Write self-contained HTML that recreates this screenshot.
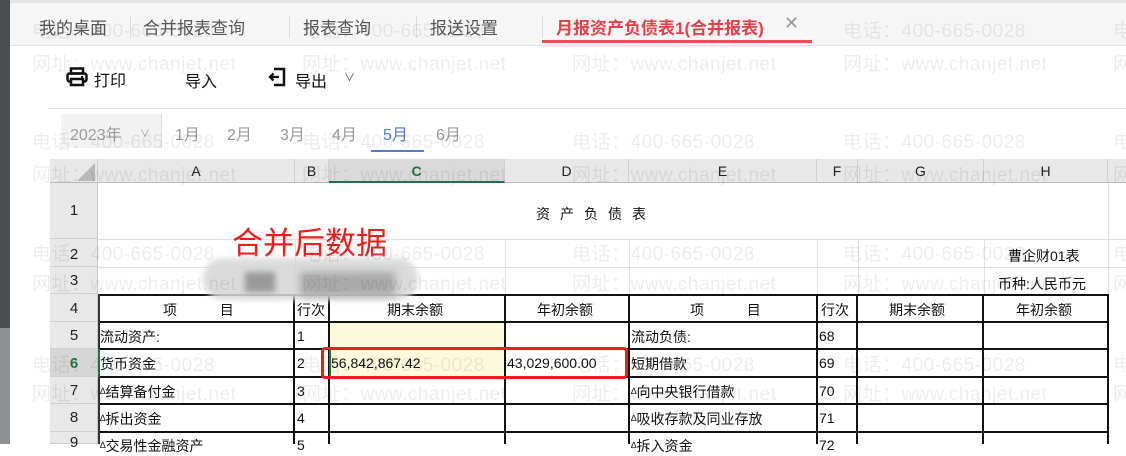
<!DOCTYPE html>
<html><head><meta charset="utf-8"><style>
*{margin:0;padding:0;box-sizing:border-box}
body{width:1126px;height:444px;overflow:hidden;background:#fff;position:relative;font-family:"Liberation Sans","Noto Sans CJK SC",sans-serif;color:#222}
.a{position:absolute}
.wm{position:absolute;font-size:19px;color:rgba(0,0,0,0.075);white-space:nowrap;z-index:50;letter-spacing:0.5px;font-family:"Liberation Sans","Noto Sans CJK SC",sans-serif}
.tab{position:absolute;top:14px;font-size:17px;color:#555}
.sep{position:absolute;top:16px;width:1px;height:22px;background:#ddd}
.ch{position:absolute;top:159px;height:24px;background:#e8e8e8;border-right:1px solid #cfcfcf;border-bottom:1px solid #bbb;text-align:center;font-size:14px;line-height:24px;color:#222}
.rh{position:absolute;left:50px;width:48px;background:#e8e8e8;border-bottom:1px solid #cfcfcf;text-align:center;font-size:15px;color:#222}
.t{position:absolute;font-size:14px;white-space:nowrap;color:#111}
.tr{font-size:9px;vertical-align:3px}
.hl{position:absolute;height:1px;background:#e0e0e0}
.vl{position:absolute;width:1px;background:#e0e0e0}
.bh{position:absolute;height:2px;background:#111}
.bv{position:absolute;width:2px;background:#111}
</style></head><body>
<div class="a" style="left:0;top:0;width:10px;height:328px;background:#4b4d4f"></div>
<div class="a" style="left:0;top:328px;width:10px;height:116px;background:#8f9091"></div>
<div class="a" style="left:10px;top:0;width:1116px;height:46px;background:#f6f6f6;border-top:3px solid #e4e4e4;border-bottom:1px solid #e2e2e2"></div>
<div class="tab" style="left:39px">我的桌面</div>
<div class="sep" style="left:130px"></div>
<div class="tab" style="left:143px">合并报表查询</div>
<div class="sep" style="left:289px"></div>
<div class="tab" style="left:303px">报表查询</div>
<div class="sep" style="left:416px"></div>
<div class="tab" style="left:430px">报送设置</div>
<div class="sep" style="left:542px"></div>
<div class="tab" style="left:556px;color:#e8404a;font-weight:bold">月报资产负债表1(合并报表)</div>
<div class="tab" style="left:784px;color:#999;font-size:18px;top:13px">✕</div>
<div class="a" style="left:542px;top:40px;width:270px;height:3px;background:#e8505a"></div>
<svg class="a" style="left:66px;top:67px" width="22" height="20" viewBox="0 0 22 20"><rect x="5" y="1.5" width="12" height="5" fill="none" stroke="#111" stroke-width="2.5"/><rect x="1.5" y="6.5" width="19" height="8" rx="2" fill="none" stroke="#111" stroke-width="2.5"/><rect x="5" y="12" width="12" height="6" fill="#fff" stroke="#111" stroke-width="2.5"/><rect x="15" y="9" width="2" height="2" fill="#111"/></svg>
<div class="t" style="left:94px;top:67px;font-size:16px">打印</div>
<div class="t" style="left:185px;top:68px;font-size:16px">导入</div>
<svg class="a" style="left:267px;top:67px" width="20" height="20" viewBox="0 0 20 20"><path d="M7 2H17V18H7" fill="none" stroke="#111" stroke-width="2.5"/><path d="M12 10H3M6.5 6.5L3 10L6.5 13.5" fill="none" stroke="#111" stroke-width="2.3"/></svg>
<div class="t" style="left:295px;top:68px;font-size:16px">导出</div>
<div class="t" style="left:344px;top:69px;font-size:11px;color:#555">∨</div>
<div class="a" style="left:48px;top:108px;width:1078px;height:1px;background:#e2e2e2"></div>
<div class="a" style="left:61px;top:114px;width:100px;height:34px;background:#f2f2f2"></div>
<div class="a" style="left:161px;top:114px;width:1px;height:34px;background:#ddd"></div>
<div class="t" style="left:70px;top:121px;font-size:16px;color:#999">2023年</div>
<div class="t" style="left:140px;top:125px;font-size:10px;color:#999">∨</div>
<div class="t" style="left:175px;top:121px;font-size:16px;color:#999">1月</div>
<div class="t" style="left:227px;top:121px;font-size:16px;color:#999">2月</div>
<div class="t" style="left:280px;top:121px;font-size:16px;color:#999">3月</div>
<div class="t" style="left:332px;top:121px;font-size:16px;color:#999">4月</div>
<div class="t" style="left:383px;top:121px;font-size:16px;color:#4a7fd4">5月</div>
<div class="t" style="left:436px;top:121px;font-size:16px;color:#999">6月</div>
<div class="a" style="left:371px;top:150px;width:53px;height:2px;background:#4a7fd4"></div>
<div class="ch" style="left:50px;width:48px"></div>
<svg class="a" style="left:75px;top:163px" width="20" height="18"><path d="M20 0V18H2Z" fill="#b9b9b9"/></svg>
<div class="ch" style="left:98px;width:197px">A</div>
<div class="ch" style="left:295px;width:34px">B</div>
<div class="ch" style="left:329px;width:176px;background:#dadada;color:#1f7244;font-weight:bold;border-bottom:2px solid #217346">C</div>
<div class="ch" style="left:505px;width:124px">D</div>
<div class="ch" style="left:629px;width:188px">E</div>
<div class="ch" style="left:817px;width:41px">F</div>
<div class="ch" style="left:858px;width:126px">G</div>
<div class="ch" style="left:984px;width:124px">H</div>
<div class="ch" style="left:1108px;width:18px;border-right:none"></div>
<div class="rh" style="top:183px;height:56px;line-height:56px">1</div>
<div class="rh" style="top:239px;height:28px;line-height:32px">2</div>
<div class="rh" style="top:267px;height:27px;line-height:28px">3</div>
<div class="rh" style="top:294px;height:28px;line-height:30px">4</div>
<div class="rh" style="top:322px;height:27px;line-height:28px">5</div>
<div class="rh" style="top:349px;height:28px;line-height:30px;background:#d6d6d6;color:#1f7244;font-weight:bold">6</div>
<div class="rh" style="top:377px;height:27px;line-height:28px">7</div>
<div class="rh" style="top:404px;height:28px;line-height:28px">8</div>
<div class="rh" style="top:432px;height:12px;line-height:22px">9</div>
<div class="a" style="left:97px;top:183px;width:1px;height:261px;background:#c8c8c8"></div>
<div class="hl" style="left:98px;top:239px;width:1028px"></div>
<div class="hl" style="left:98px;top:267px;width:1028px"></div>
<div class="vl" style="left:295px;top:239px;height:55px"></div>
<div class="vl" style="left:329px;top:239px;height:55px"></div>
<div class="vl" style="left:505px;top:239px;height:55px"></div>
<div class="vl" style="left:629px;top:239px;height:55px"></div>
<div class="vl" style="left:817px;top:239px;height:55px"></div>
<div class="vl" style="left:858px;top:239px;height:55px"></div>
<div class="vl" style="left:984px;top:239px;height:55px"></div>
<div class="vl" style="left:1108px;top:183px;height:261px"></div>
<div class="a" style="left:330px;top:323px;width:175px;height:54px;background:#fcf9dc"></div>
<div class="bh" style="left:98px;top:294px;width:1011px"></div>
<div class="bh" style="left:98px;top:321px;width:1011px"></div>
<div class="bh" style="left:98px;top:348px;width:1011px"></div>
<div class="bh" style="left:98px;top:376px;width:1011px"></div>
<div class="bh" style="left:98px;top:403px;width:1011px"></div>
<div class="bh" style="left:98px;top:431px;width:1011px"></div>
<div class="bv" style="left:98px;top:294px;height:150px;background:#333"></div>
<div class="bv" style="left:293px;top:294px;height:150px"></div>
<div class="bv" style="left:328px;top:294px;height:150px"></div>
<div class="bv" style="left:504px;top:294px;height:150px"></div>
<div class="bv" style="left:628px;top:294px;height:150px"></div>
<div class="bv" style="left:816px;top:294px;height:150px"></div>
<div class="bv" style="left:856px;top:294px;height:150px"></div>
<div class="bv" style="left:982px;top:294px;height:150px"></div>
<div class="bv" style="left:1107px;top:294px;height:150px"></div>
<div class="a" style="left:98px;top:349px;width:2px;height:28px;background:#217346"></div>
<div class="a" style="left:329px;top:349px;width:2px;height:28px;background:#217346"></div>
<div class="t" style="left:536px;top:204px;letter-spacing:10px">资产负债表</div>
<div class="t" style="left:1008px;top:246px">曹企财01表</div>
<div class="t" style="left:998px;top:274px">币种:人民币元</div>
<div class="t" style="left:163px;top:300px">项&nbsp;&nbsp;&nbsp;&nbsp;&nbsp;&nbsp;&nbsp;&nbsp;&nbsp;&nbsp;&nbsp;目</div>
<div class="t" style="left:297px;top:300px">行次</div>
<div class="t" style="left:387px;top:300px">期末余额</div>
<div class="t" style="left:537px;top:300px">年初余额</div>
<div class="t" style="left:690px;top:300px">项&nbsp;&nbsp;&nbsp;&nbsp;&nbsp;&nbsp;&nbsp;&nbsp;&nbsp;&nbsp;&nbsp;目</div>
<div class="t" style="left:821px;top:300px">行次</div>
<div class="t" style="left:889px;top:300px">期末余额</div>
<div class="t" style="left:1016px;top:300px">年初余额</div>
<div class="t" style="left:100px;top:327px">流动资产:</div>
<div class="t" style="left:297px;top:328px">1</div>
<div class="t" style="left:631px;top:327px">流动负债:</div>
<div class="t" style="left:819px;top:328px">68</div>
<div class="t" style="left:100px;top:354px">货币资金</div>
<div class="t" style="left:297px;top:355px">2</div>
<div class="t" style="left:331px;top:355px">56,842,867.42</div>
<div class="t" style="left:507px;top:355px">43,029,600.00</div>
<div class="t" style="left:631px;top:354px">短期借款</div>
<div class="t" style="left:819px;top:355px">69</div>
<div class="t" style="left:100px;top:382px"><span class="tr">∆</span>结算备付金</div>
<div class="t" style="left:297px;top:383px">3</div>
<div class="t" style="left:631px;top:382px"><span class="tr">∆</span>向中央银行借款</div>
<div class="t" style="left:819px;top:383px">70</div>
<div class="t" style="left:100px;top:409px"><span class="tr">∆</span>拆出资金</div>
<div class="t" style="left:297px;top:410px">4</div>
<div class="t" style="left:631px;top:409px"><span class="tr">∆</span>吸收存款及同业存放</div>
<div class="t" style="left:819px;top:410px">71</div>
<div class="t" style="left:100px;top:436px"><span class="tr">∆</span>交易性金融资产</div>
<div class="t" style="left:297px;top:437px">5</div>
<div class="t" style="left:631px;top:436px"><span class="tr">∆</span>拆入资金</div>
<div class="t" style="left:819px;top:437px">72</div>
<div class="a" style="left:321px;top:347px;width:307px;height:32px;border:3px solid #e52020;border-radius:4px;z-index:20"></div>
<div class="a" style="left:232px;top:218px;font-size:31px;color:#ee1c1c;white-space:nowrap;z-index:20">合并后数据</div>
<div class="a" style="left:203px;top:258px;width:215px;height:42px;background:#d8d8d8;border-radius:20px;filter:blur(3px);z-index:20;opacity:0.9"></div>
<div class="a" style="left:245px;top:272px;width:30px;height:20px;background:#999;filter:blur(3px);z-index:21"></div>
<div class="a" style="left:300px;top:272px;width:95px;height:24px;background:#aaa;filter:blur(4px);z-index:21"></div>
<div class="wm" style="left:32px;top:16px">电话：400-665-0028</div>
<div class="wm" style="left:302px;top:16px">电话：400-665-0028</div>
<div class="wm" style="left:843px;top:16px">电话：400-665-0028</div>
<div class="wm" style="left:1113px;top:16px">电话</div>
<div class="wm" style="left:32px;top:49px">网址：www.chanjet.net</div>
<div class="wm" style="left:302px;top:49px">网址：www.chanjet.net</div>
<div class="wm" style="left:572px;top:49px">网址：www.chanjet.net</div>
<div class="wm" style="left:843px;top:49px">网址：www.chanjet.net</div>
<div class="wm" style="left:1113px;top:49px">网址</div>
<div class="wm" style="left:32px;top:127px">电话：400-665-0028</div>
<div class="wm" style="left:302px;top:127px">电话：400-665-0028</div>
<div class="wm" style="left:572px;top:127px">电话：400-665-0028</div>
<div class="wm" style="left:843px;top:127px">电话：400-665-0028</div>
<div class="wm" style="left:1113px;top:127px">电话</div>
<div class="wm" style="left:32px;top:160px">网址：www.chanjet.net</div>
<div class="wm" style="left:302px;top:160px">网址：www.chanjet.net</div>
<div class="wm" style="left:572px;top:160px">网址：www.chanjet.net</div>
<div class="wm" style="left:843px;top:160px">网址：www.chanjet.net</div>
<div class="wm" style="left:1113px;top:160px">网址</div>
<div class="wm" style="left:32px;top:239px">电话：400-665-0028</div>
<div class="wm" style="left:302px;top:239px">电话：400-665-0028</div>
<div class="wm" style="left:572px;top:239px">电话：400-665-0028</div>
<div class="wm" style="left:843px;top:239px">电话：400-665-0028</div>
<div class="wm" style="left:1113px;top:239px">电话</div>
<div class="wm" style="left:32px;top:269px">网址：www.chanjet.net</div>
<div class="wm" style="left:302px;top:269px">网址：www.chanjet.net</div>
<div class="wm" style="left:572px;top:269px">网址：www.chanjet.net</div>
<div class="wm" style="left:843px;top:269px">网址：www.chanjet.net</div>
<div class="wm" style="left:1113px;top:269px">网址</div>
<div class="wm" style="left:32px;top:350px">电话：400-665-0028</div>
<div class="wm" style="left:302px;top:350px">电话：400-665-0028</div>
<div class="wm" style="left:572px;top:350px">电话：400-665-0028</div>
<div class="wm" style="left:843px;top:350px">电话：400-665-0028</div>
<div class="wm" style="left:1113px;top:350px">电话</div>
<div class="wm" style="left:32px;top:379px">网址：www.chanjet.net</div>
<div class="wm" style="left:302px;top:379px">网址：www.chanjet.net</div>
<div class="wm" style="left:572px;top:379px">网址：www.chanjet.net</div>
<div class="wm" style="left:843px;top:379px">网址：www.chanjet.net</div>
<div class="wm" style="left:1113px;top:379px">网址</div>
</body></html>
